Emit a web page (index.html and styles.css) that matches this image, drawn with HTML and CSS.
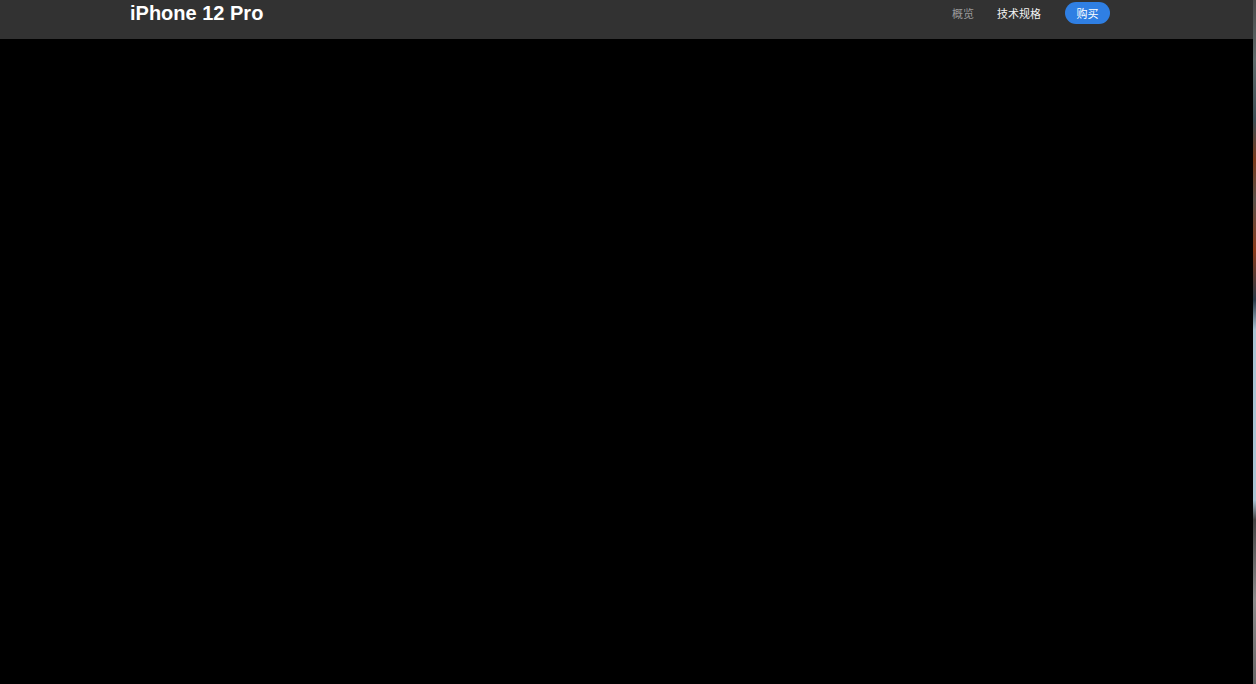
FILE: index.html
```html
<!DOCTYPE html>
<html>
<head>
  <link rel="stylesheet" href="styles.css">
</head>
<body>
  <div class="page">
    <nav class="product-nav">
      <div class="nav-inner">
        <div class="product-title">iPhone 12 Pro</div>
        <div class="nav-links">
          <a class="nav-link muted" href="#">概览</a>
          <a class="nav-link" href="#">技术规格</a>
          <a class="buy-button" href="#">购买</a>
        </div>
      </div>
    </nav>
    <main class="stage"></main>
  </div>
  <div class="edge-strip"></div>
</body>
</html>
```

FILE: styles.css
```css
html, body {
  height: 100%;
}

body {
  margin: 0;
  display: flex;
  background: #000;
  font-family: "Liberation Sans", "Noto Sans CJK SC", sans-serif;
  overflow: hidden;
}

.page {
  flex: 1;
  display: flex;
  flex-direction: column;
}

.product-nav {
  height: 39px;
  background: #323232;
}

.nav-inner {
  width: 980px;
  height: 26px;
  margin-left: 130px;
  display: flex;
  align-items: center;
  justify-content: space-between;
}

.product-title {
  color: #fff;
  font-size: 20px;
  font-weight: bold;
  letter-spacing: 0;
}

.nav-links {
  display: flex;
  align-items: center;
}

.nav-link {
  color: #f2f2f2;
  font-size: 11px;
  text-decoration: none;
  margin-left: 23px;
}

.nav-link.muted {
  color: #9a9a9a;
}

.buy-button {
  margin-left: 24px;
  width: 45px;
  height: 22px;
  border-radius: 11px;
  background: #2f7fe3;
  color: #fff;
  font-size: 11px;
  text-decoration: none;
  display: flex;
  align-items: center;
  justify-content: center;
}

.stage {
  flex: 1;
  background: #000;
}

.edge-strip {
  width: 3px;
  background: linear-gradient(#4a4a4a 0, #5e6a6a 60px, #3c4e55 120px, #7a3a1a 160px, #5a5048 200px, #8a3a1a 250px, #2a3a48 300px, #a8c4d4 330px, #a8c4d4 500px, #444 520px, #8a8a8a 600px, #666 684px);
}
```
